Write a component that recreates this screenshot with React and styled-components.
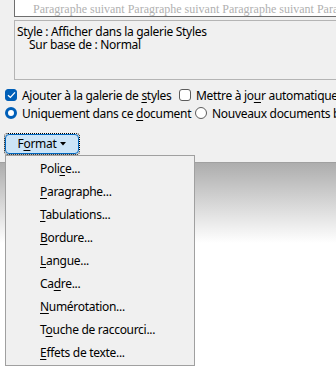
import React from "react";
import styled, { createGlobalStyle } from "styled-components";

const GlobalStyle = createGlobalStyle`
  html, body {
    margin: 0;
    padding: 0;
    background: #ffffff;
  }
  body {
    font-family: "Noto Sans", "Open Sans", sans-serif;
    font-size: 12px;
    letter-spacing: -0.3px;
    color: #000000;
  }
`;

const menuItems = [
  { before: "Poli", key: "c", after: "e..." },
  { before: "", key: "P", after: "aragraphe..." },
  { before: "", key: "T", after: "abulations..." },
  { before: "", key: "B", after: "ordure..." },
  { before: "", key: "L", after: "angue..." },
  { before: "Ca", key: "d", after: "re..." },
  { before: "", key: "N", after: "umérotation..." },
  { before: "T", key: "o", after: "uche de raccourci..." },
  { before: "", key: "E", after: "ffets de texte..." },
];

const AccessKey = ({ before, k, after }) => (
  <Label>
    {before}
    <U>{k}</U>
    {after}
  </Label>
);

const CheckIcon = () => (
  <svg width="9" height="8" viewBox="0 0 9 8">
    <path d="M1 4.2 L3.4 6.4 L8 1.4" fill="none" stroke="#fff" strokeWidth="1.3" />
  </svg>
);

const Caret = () => (
  <svg width="6" height="4" viewBox="0 0 6 4">
    <path d="M0 0 H6 L3 3.5 Z" fill="#000" />
  </svg>
);

const App = () => {
  return (
    <Page>
      <GlobalStyle />
      <Dialog>
        <Preview>
          Paragraphe suivant Paragraphe suivant Paragraphe suivant Paragraphe
          suivant
        </Preview>
        <Description>
          <Line>Style : Afficher dans la galerie Styles</Line>
          <Line indent>Sur base de : Normal</Line>
        </Description>
        <Options>
          <OptionRow>
            <Option width={174}>
              <Box checked>
                <CheckIcon />
              </Box>
              <AccessKey before="Ajouter à la galerie de " k="s" after="tyles" />
            </Option>
            <Option>
              <Box />
              <AccessKey before="Mettre à jo" k="u" after="r automatiquement" />
            </Option>
          </OptionRow>
          <OptionRow>
            <Option width={190}>
              <Radio checked />
              <AccessKey before="Uniquement dans ce " k="d" after="ocument" />
            </Option>
            <Option>
              <Radio />
              <Label>Nouveaux documents basés sur ce modèle</Label>
            </Option>
          </OptionRow>
        </Options>
        <FocusRing>
          <FormatButton>
            <AccessKey before="F" k="o" after="rmat" />
            <Caret />
          </FormatButton>
        </FocusRing>
      </Dialog>
      <Shadow />
      <Menu>
        {menuItems.map((item, i) => (
          <MenuItem key={i}>
            <AccessKey before={item.before} k={item.key} after={item.after} />
          </MenuItem>
        ))}
      </Menu>
    </Page>
  );
};

const Page = styled.div`
  position: relative;
  width: 336px;
  height: 371px;
  overflow: hidden;
  background: #ffffff;
`;

const Dialog = styled.div`
  height: 163px;
  background: #f0f0f0;
  padding-left: 5px;
  box-sizing: border-box;
  border-bottom: 1px solid #a0a0a0;
  overflow: hidden;
`;

const Preview = styled.div`
  margin-left: 9px;
  width: 400px;
  height: 17px;
  box-sizing: border-box;
  background: #ffffff;
  border-left: 1px solid #6e6e6e;
  border-bottom: 1px solid #6e6e6e;
  padding-left: 18px;
  font-family: "Liberation Serif", serif;
  font-size: 12px;
  letter-spacing: 0;
  line-height: 18px;
  color: #b0b0b0;
  white-space: nowrap;
  overflow: hidden;
`;

const Description = styled.div`
  margin-top: 3px;
  margin-left: 9px;
  width: 400px;
  height: 60px;
  box-sizing: border-box;
  border: 1px solid #b4b4b4;
  padding: 4px 2px;
  white-space: nowrap;
`;

const Line = styled.div`
  height: 12.5px;
  line-height: 13px;
  padding-left: ${(p) => (p.indent ? "12px" : "0")};
`;

const Options = styled.div`
  margin-top: 6px;
`;

const OptionRow = styled.div`
  display: flex;
  height: 18px;
  align-items: center;
  white-space: nowrap;
`;

const Option = styled.div`
  display: flex;
  align-items: center;
  gap: 5px;
  flex: none;
  width: ${(p) => (p.width ? `${p.width}px` : "auto")};
`;

const Label = styled.span`
  white-space: nowrap;
`;

const Box = styled.span`
  display: inline-flex;
  flex: none;
  align-items: center;
  justify-content: center;
  width: 12px;
  height: 12px;
  box-sizing: border-box;
  border-radius: 3px;
  background: ${(p) => (p.checked ? "#005fb8" : "#ffffff")};
  border: 1px solid ${(p) => (p.checked ? "#005fb8" : "#5c5c5c")};
`;

const Radio = styled.span`
  display: inline-block;
  flex: none;
  width: 12px;
  height: 12px;
  box-sizing: border-box;
  border-radius: 50%;
  background: #ffffff;
  border: ${(p) => (p.checked ? "3.5px solid #005fb8" : "1px solid #5c5c5c")};
`;

const U = styled.span`
  text-decoration: underline;
  text-underline-offset: 2px;
`;

const FocusRing = styled.div`
  margin-top: 12px;
  width: 74px;
  height: 20px;
  box-sizing: border-box;
  outline: 1px dotted #000000;
  outline-offset: 0;
  border-radius: 3px;
`;

const FormatButton = styled.div`
  height: 100%;
  box-sizing: border-box;
  border: 1px solid #0067c0;
  border-radius: 4px;
  background: #cce4f7;
  display: flex;
  align-items: center;
  justify-content: center;
  gap: 4px;
  line-height: 16px;
`;

const Shadow = styled.div`
  height: 80px;
  background: linear-gradient(#adadad, #ffffff);
`;

const Menu = styled.div`
  position: absolute;
  left: 5px;
  top: 155px;
  width: 190px;
  box-sizing: border-box;
  background: #f0f0f0;
  border: 1px solid #a0a0a0;
  padding: 1px 0 1px;
`;

const MenuItem = styled.div`
  height: 23px;
  line-height: 23px;
  padding-left: 34px;
  white-space: nowrap;
`;

export default App;
